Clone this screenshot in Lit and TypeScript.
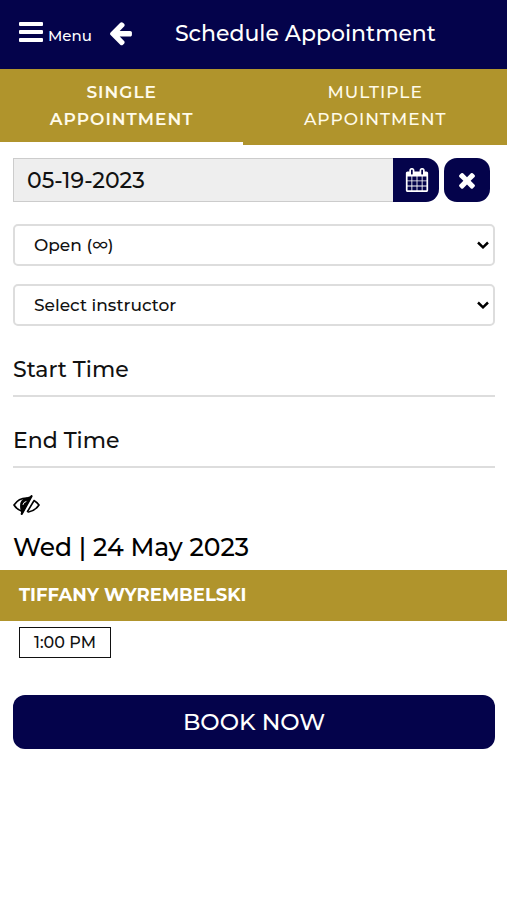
import { LitElement, html, css, svg } from "lit";
import { customElement, state } from "lit/decorators.js";

const calendarPath =
  "M192 1664h288v-288h-288v288zm352 0h320v-288h-320v288zm-352-352h288v-320h-288v320zm352 0h320v-320h-320v320zm-352-384h288v-288h-288v288zm736 736h320v-288h-320v288zm-384-736h320v-288h-320v288zm768 736h288v-288h-288v288zm-384-352h320v-320h-320v320zm-352-864v-288q0-13-9.5-22.5t-22.5-9.5h-64q-13 0-22.5 9.5t-9.5 22.5v288q0 13 9.5 22.5t22.5 9.5h64q13 0 22.5-9.5t9.5-22.5zm736 864h288v-320h-288v320zm-384-384h320v-288h-320v288zm384 0h288v-288h-288v288zm32-480v-288q0-13-9.5-22.5t-22.5-9.5h-64q-13 0-22.5 9.5t-9.5 22.5v288q0 13 9.5 22.5t22.5 9.5h64q13 0 22.5-9.5t9.5-22.5zm384-64v1280q0 52-38 90t-90 38h-1408q-52 0-90-38t-38-90v-1280q0-52 38-90t90-38h128v-96q0-66 47-113t113-47h64q66 0 113 47t47 113v96h384v-96q0-66 47-113t113-47h64q66 0 113 47t47 113v96h128q52 0 90 38t38 90z";
const timesPath =
  "M1490 1322q0 40-28 68l-136 136q-28 28-68 28t-68-28l-294-294-294 294q-28 28-68 28t-68-28l-136-136q-28-28-28-68t28-68l294-294-294-294q-28-28-28-68t28-68l136-136q28-28 68-28t68 28l294 294 294-294q28-28 68-28t68 28l136 136q28 28 28 68t-28 68l-294 294 294 294q28 28 28 68z";
const arrowPath =
  "M1664 896v128q0 53-32.5 90.5t-84.5 37.5h-704l293 294q38 36 38 90t-38 90l-75 76q-37 37-90 37-52 0-91-37l-651-652q-37-37-37-90 0-52 37-91l651-650q38-38 91-38 52 0 90 38l75 74q38 38 38 91t-38 91l-293 293h704q52 0 84.5 37.5t32.5 90.5z";

const chevron = svg`<svg class="chevron" viewBox="0 0 12 8" aria-hidden="true"><path d="M1 1.5 6 6.300l5-4.800" fill="none" stroke="#000" stroke-width="2.500"/></svg>`;

@customElement("app-root")
export class AppRoot extends LitElement {
  @state() private tab = 0;

  static styles = css`
    :host {
      display: block;
      min-height: 100vh;
      background: #fff;
      color: #111;
      font-family: Montserrat, Inter, "Liberation Sans", sans-serif;
      font-size: 22px;
      font-weight: 500;
    }
    * { box-sizing: border-box; }
    button, input, select { font: inherit; color: inherit; margin: 0; }
    button { border: 0; background: none; padding: 0; cursor: pointer; }
    svg { display: block; flex: none; }
    .top {
      display: flex;
      align-items: center;
      height: 69px;
      padding: 0 19px 2px;
      background: #04034b;
      color: #fff;
    }
    .menu { display: flex; align-items: flex-end; gap: 5px; font-size: 15px; line-height: 20px; }
    .bars { width: 24px; height: 20px; margin-bottom: 4px; }
    .back { margin-left: 17px; }
    .arrow { width: 23px; height: 25px; fill: #fff; }
    .title { margin: 0 0 0 43px; font-size: 22px; line-height: 32px; font-weight: 500; white-space: nowrap; }
    .tabs { display: grid; grid-template-columns: 48fr 52fr; background: #b0942c; }
    .tab {
      padding: 10px 40px 9px;
      border-bottom: 3px solid transparent;
      color: #fffbea;
      font-size: 17px;
      line-height: 27px;
      letter-spacing: 1px;
      text-transform: uppercase;
    }
    .tab.active { border-bottom-color: #fff; font-weight: 600; }
    .form { padding: 13px 12px 0 13px; }
    .date { display: flex; height: 44px; padding-right: 5px; }
    .date-input {
      flex: 1;
      min-width: 0;
      padding: 0 13px;
      border: 1px solid #ccc;
      border-right: 0;
      border-radius: 0;
      background: #eee;
      outline: none;
    }
    .square { display: grid; place-items: center; width: 46px; background: #04034b; }
    .pick { padding-left: 2px; border-radius: 0 13px 13px 0; }
    .clear { margin-left: 5px; border-radius: 13px; }
    .glyph { width: 24px; height: 24px; fill: #fff; }
    .field { display: grid; align-items: center; margin-top: 18px; }
    .field.first { margin-top: 22px; }
    .field > * { grid-area: 1 / 1; }
    .select {
      appearance: none;
      width: 100%;
      height: 42px;
      padding: 0 32px 0 19px;
      border: 2px solid #ddd;
      border-radius: 5px;
      background: #fff;
      font-size: 17px;
    }
    .chevron { width: 12px; height: 8px; margin-right: 6px; justify-self: end; pointer-events: none; }
    .time {
      display: block;
      width: 100%;
      height: 53px;
      margin-top: 18px;
      padding: 0;
      border: 0;
      border-bottom: 2px solid #ddd;
      border-radius: 0;
      outline: none;
    }
    .time::placeholder { color: #111; opacity: 1; }
    .eye { display: block; margin-top: 27px; }
    .eye-icon { width: 27px; height: 20px; }
    .day { margin: 16px 0 7px; color: #000; font-size: 25px; line-height: 32px; font-weight: 500; }
    .name {
      margin: 0;
      padding: 0 19px;
      background: #b0942c;
      color: #fff;
      font-size: 18px;
      line-height: 51px;
      font-weight: 700;
    }
    .slots { padding: 6px 19px 0; }
    .slot { width: 92px; height: 31px; border: 1px solid #111; font-size: 16px; }
    .footer { padding: 37px 12px 0 13px; }
    .book {
      width: 100%;
      height: 54px;
      border-radius: 12px;
      background: #04034b;
      color: #fff;
      font-size: 23px;
      font-weight: 500;
    }
  `;

  render() {
    return html`
      <header class="top">
        <button class="menu">
          <svg class="bars" viewBox="0 0 24 20" fill="#fff" aria-hidden="true">
            <rect width="24" height="4" rx="1" /><rect y="8" width="24" height="4" rx="1" /><rect y="16" width="24" height="4" rx="1" />
          </svg>
          Menu
        </button>
        <button class="back" aria-label="Back">
          <svg class="arrow" viewBox="128 104 1536 1680"><path d=${arrowPath} /></svg>
        </button>
        <h1 class="title">Schedule Appointment</h1>
      </header>
      <nav class="tabs" role="tablist">
        ${["Single Appointment", "Multiple Appointment"].map(
          (label, i) => html`<button
            class="tab ${this.tab === i ? "active" : ""}"
            role="tab"
            aria-selected=${this.tab === i}
            @click=${() => (this.tab = i)}
          >${label}</button>`
        )}
      </nav>
      <div class="form">
        <div class="date">
          <input class="date-input" aria-label="Date" readonly value="05-19-2023" />
          <button class="square pick" aria-label="Pick date">
            <svg class="glyph" viewBox="0 0 1792 1792"><path d=${calendarPath} /></svg>
          </button>
          <button class="square clear" aria-label="Clear date">
            <svg class="glyph" viewBox="0 0 1792 1792"><path d=${timesPath} /></svg>
          </button>
        </div>
        <div class="field first">
          <select class="select" aria-label="Availability"><option>Open (∞)</option></select>
          ${chevron}
        </div>
        <div class="field">
          <select class="select" aria-label="Instructor"><option>Select instructor</option></select>
          ${chevron}
        </div>
        <input class="time" aria-label="Start Time" placeholder="Start Time" />
        <input class="time" aria-label="End Time" placeholder="End Time" />
        <button class="eye" aria-label="Toggle visibility">
          <svg class="eye-icon" viewBox="0 0 27 20" fill="none" stroke="#000" stroke-width="1.600" stroke-linecap="round">
            <path d="M8.500 16C5.500 15 2.500 12.500 1 10 4 5.500 8.500 3 13.500 3c1.500 0 2.500.2 3.500.5M21 5.500c2 1.200 3.700 2.700 5 4.500-2.500 3.800-6 6.200-10.500 7" />
            <path d="M17.500 2 9 18c-1-4-2.500-9 .5-12.500C11 3.500 14 3.500 17.500 2z" fill="#000" />
            <path d="M18.500 1.200 8.800 18.800" stroke-width="2.200" />
            <path d="M20.500 6.500 14.500 16.500" />
            <path d="M10 9.500q.5-2.500 3-3" stroke="#fff" stroke-width="1" />
          </svg>
        </button>
        <h2 class="day">Wed | 24 May 2023</h2>
      </div>
      <h3 class="name">TIFFANY WYREMBELSKI</h3>
      <div class="slots"><button class="slot">1:00 PM</button></div>
      <div class="footer"><button class="book">BOOK NOW</button></div>
    `;
  }
}
